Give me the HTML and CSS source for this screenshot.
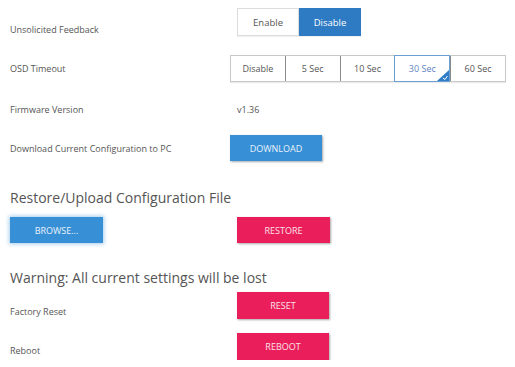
FILE: index.html
```html
<!DOCTYPE html>
<html lang="en">
<head>
 <meta charset="UTF-8">
 <title>Device Settings</title>
 <link rel="stylesheet" href="styles.css">
</head>
<body>
 <div class="page">

 <div class="row row-feedback">
 <span class="label">Unsolicited Feedback</span>
 <div class="toggle indent">
 <span class="seg">Enable</span>
 <span class="seg seg-on">Disable</span>
 </div>
 </div>

 <div class="row row-osd">
 <span class="label">OSD Timeout</span>
 <div class="choices">
 <span class="cell">Disable</span>
 <span class="cell">5 Sec</span>
 <span class="cell">10 Sec</span>
 <span class="cell cell-picked">30 Sec
 <svg class="tick" width="12" height="11" viewBox="0 0 12 11">
 <polygon points="12,0 12,11 0,11" fill="#2f7dc6"/>
 <polyline points="6,8 8,9.5 10.5,6" fill="none" stroke="#fff" stroke-width="1"/>
 </svg>
 </span>
 <span class="cell">60 Sec</span>
 </div>
 </div>

 <div class="row row-fw">
 <span class="label">Firmware Version</span>
 <span class="value indent">v1.36</span>
 </div>

 <div class="row row-dl">
 <span class="label">Download Current Configuration to PC</span>
 <button class="btn btn-blue">DOWNLOAD</button>
 </div>

 <h2 class="title title-restore">Restore/Upload Configuration File</h2>

 <div class="row row-restore">
 <span class="label"><button class="btn btn-blue btn-focus">BROWSE...</button></span>
 <button class="btn btn-pink indent">RESTORE</button>
 </div>

 <h2 class="title title-warn">Warning: All current settings will be lost</h2>

 <div class="row row-reset">
 <span class="label">Factory Reset</span>
 <button class="btn btn-pink indent">RESET</button>
 </div>

 <div class="row row-reboot">
 <span class="label">Reboot</span>
 <button class="btn btn-pink indent">REBOOT</button>
 </div>

 </div>
</body>
</html>
```

FILE: styles.css
```css
body {
margin: 0;
background: #fff;
font-family: "Open Sans", "Noto Sans", sans-serif;
color: #555;
}
.page {
padding: 0 10px;
}
.row {
display: grid;
grid-template-columns: 220px auto;
align-items: center;
}
.label {
font-size: 9px;
color: #555;
}
.indent {
margin-left: 7px;
}
.value {
font-size: 9px;
}

/* rows */
.row-feedback {
margin-top: 8px;
height: 28px;
}
.row-feedback .label {
padding-top: 14px;
}
.row-osd {
margin-top: 19px;
height: 27px;
}
.row-fw {
margin-top: 14px;
height: 27px;
}
.row-dl {
margin-top: 12px;
height: 26px;
}
.row-restore {
margin-top: 9px;
height: 26px;
}
.row-reset {
margin-top: 4px;
height: 27px;
}
.row-reset .label {
padding-top: 11px;
}
.row-reboot {
margin-top: 14px;
height: 27px;
}
.row-reboot .label {
padding-top: 8px;
}

.title {
margin: 0;
font-size: 14px;
line-height: 20px;
font-weight: 500;
color: #555;
}
.title-restore {
margin-top: 27px;
}
.title-warn {
margin-top: 25px;
}

/* toggles */
.toggle {
display: flex;
width: 124px;
height: 28px;
box-shadow: 0 1px 1px rgba(0,0,0,0.06);
}
.seg {
flex: 1;
display: flex;
align-items: center;
justify-content: center;
font-size: 9.5px;
color: #555;
border: 1px solid #dcdcdc;
}
.seg-on {
background: #2e7bc4;
border-color: #2e7bc4;
color: #fff;
}
.choices {
display: flex;
width: 276px;
height: 27px;
border: 1px solid #c8c8c8;
box-sizing: border-box;
box-shadow: 0 1px 1px rgba(0,0,0,0.08);
}
.cell {
position: relative;
flex: 1;
display: flex;
align-items: center;
justify-content: center;
font-size: 9px;
color: #555;
border-left: 1px solid #8a8a8a;
}
.cell:first-child {
border-left: none;
}
.cell-picked {
color: #5f86c2;
border: 1px solid #6a9fd4;
margin: -1px 0;
}
.tick {
position: absolute;
right: 0;
bottom: 0;
}

/* buttons */
.btn {
width: 92px;
height: 26px;
border: none;
padding: 0;
font-family: inherit;
font-size: 9px;
color: #eaf2fb;
cursor: pointer;
box-shadow: 1px 1px 2px rgba(0,0,0,0.35);
}
.btn-blue {
background: #378fd5;
}
.btn-focus {
width: 93px;
box-shadow: 0 0 4px 1px rgba(55,143,213,0.45);
}
.btn-pink {
background: #e91e5b;
color: #fbe3ea;
height: 27px;
}
.row-restore .btn-pink {
height: 26px;
width: 93px;
}
```
